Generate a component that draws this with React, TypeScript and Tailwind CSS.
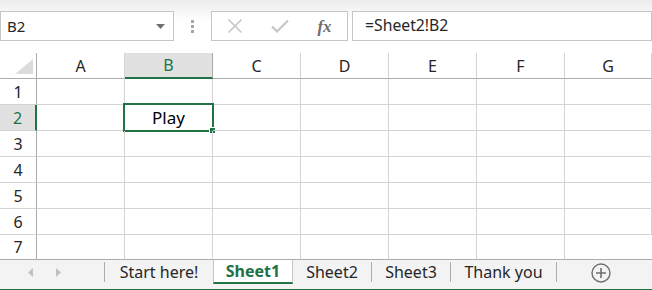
import React from "react";

const cols = ["A", "B", "C", "D", "E", "F", "G"];
const rows = [1, 2, 3, 4, 5, 6, 7];
const font = { fontFamily: '"Noto Sans", "Open Sans", sans-serif' };

function FormulaBar() {
  return (
    <div className="flex items-center h-[41px] pt-[11px] bg-gradient-to-b from-[#ebebeb] via-white to-white">
      <div className="flex items-center justify-between w-[174px] h-[30px] border border-[#c6c6c6] bg-white pl-[6px] pr-[8px]">
        <span className="text-[15px] text-[#262626] leading-none">B2</span>
        <svg width="9" height="5" viewBox="0 0 9 5">
          <path d="M0 0h9L4.5 5z" fill="#6f6f6f" />
        </svg>
      </div>
      <div className="flex flex-col gap-[2px] w-[37px] items-center">
        <span className="w-[3px] h-[3px] bg-[#a6a6a6]" />
        <span className="w-[3px] h-[3px] bg-[#a6a6a6]" />
        <span className="w-[3px] h-[3px] bg-[#a6a6a6]" />
      </div>
      <div className="flex items-center w-[137px] h-[30px] border border-[#c6c6c6] bg-white">
        <div className="w-[46px] flex justify-center">
          <svg width="16" height="16" viewBox="0 0 16 16">
            <path d="M1.5 1.5l13 13M14.5 1.5l-13 13" stroke="#c6c6c6" strokeWidth="1.6" />
          </svg>
        </div>
        <div className="w-[44px] flex justify-center">
          <svg width="18" height="14" viewBox="0 0 18 14">
            <path d="M1 7.5l5 5L17 1.5" stroke="#c6c6c6" strokeWidth="2.2" fill="none" />
          </svg>
        </div>
        <div className="flex-1 flex justify-center">
          <span className="italic font-bold text-[17px] text-[#6f6f6f] leading-none" style={{ fontFamily: '"Liberation Serif", serif' }}>
            fx
          </span>
        </div>
      </div>
      <div className="w-[4px]" />
      <div className="flex-1 h-[30px] border border-[#c6c6c6] bg-white flex items-center pl-[12px]">
        <span className="text-[15.75px] text-[#262626] leading-none">=Sheet2!B2</span>
      </div>
    </div>
  );
}

function Grid() {
  return (
    <div className="grid grid-cols-[37px_repeat(6,88px)_87px] mt-[12px]">
      <div className="h-[26px] border-r border-b border-[#ababab] bg-white flex items-end justify-end pr-[3px] pb-[4px]">
        <svg width="18" height="15" viewBox="0 0 18 15">
          <path d="M18 0v15H0z" fill="#dcdcdc" />
        </svg>
      </div>
      {cols.map((c) => (
        <div
          key={c}
          className={
            c === "B"
              ? "h-[26px] flex items-center justify-center text-[16px] bg-[#e1e1e1] text-[#217346] border-r border-[#ababab] border-b-2 border-b-[#217346]"
              : "h-[26px] flex items-center justify-center text-[16px] bg-white text-[#262626] border-r border-r-[#d4d4d4] border-b border-b-[#ababab] last:border-r-0"
          }
        >
          {c}
        </div>
      ))}
      {rows.map((r) => (
        <React.Fragment key={r}>
          <div
            className={
              r === 2
                ? "h-[26px] flex items-center justify-center text-[16px] bg-[#e1e1e1] text-[#217346] border-r-2 border-r-[#217346] border-b border-b-[#d4d4d4]"
                : r === 7
                ? "h-[25px] flex items-center justify-center text-[16px] text-[#262626] border-r border-b border-[#ababab]"
                : "h-[26px] flex items-center justify-center text-[16px] text-[#262626] border-r border-r-[#ababab] border-b border-b-[#d4d4d4]"
            }
          >
            {r}
          </div>
          {cols.map((c) => (
            <div
              key={c}
              className={
                r === 7
                  ? "relative h-[25px] border-r border-r-[#d4d4d4] border-b border-b-[#ababab] last:border-r-0"
                  : "relative h-[26px] border-r border-b border-[#d4d4d4] last:border-r-0"
              }
            >
              {r === 2 && c === "B" && (
                <>
                  <div className="absolute -left-[2px] -top-[2px] -right-[2px] -bottom-[2px] border-2 border-[#217346] flex items-center justify-center text-[17px] text-black">
                    Play
                  </div>
                  <div className="absolute -right-[4px] -bottom-[4px] w-[7px] h-[7px] bg-[#217346] border border-white" />
                </>
              )}
            </div>
          ))}
        </React.Fragment>
      ))}
    </div>
  );
}

function Tabs() {
  const sep = <div className="w-px h-[20px] bg-[#ababab]" />;
  return (
    <div className="flex items-start h-[31px] bg-[#f3f3f3] border-b-2 border-[#217346]">
      <div className="flex items-center h-[24px] w-[104px] pl-[28px] gap-[23px]">
        <svg width="5" height="9" viewBox="0 0 5 9">
          <path d="M5 0v9L0 4.5z" fill="#c0c0c0" />
        </svg>
        <svg width="5" height="9" viewBox="0 0 5 9">
          <path d="M0 0v9l5-4.5z" fill="#c0c0c0" />
        </svg>
      </div>
      <div className="flex items-center h-[24px] text-[16px] text-[#262626]">
        {sep}
        <div className="w-[108px] text-center">Start here!</div>
        <div className="h-[25px] -mt-px w-[80px] bg-white border-x border-[#c6c6c6] border-b-2 border-b-[#217346] flex items-center justify-center font-bold text-[#217346]">
          Sheet1
        </div>
        <div className="w-[78px] text-center">Sheet2</div>
        {sep}
        <div className="w-[78px] text-center">Sheet3</div>
        {sep}
        <div className="w-[105px] text-center">Thank you</div>
        {sep}
        <div className="w-[87px] flex justify-center pt-[2px]">
          <svg width="20" height="20" viewBox="0 0 20 20">
            <circle cx="10" cy="10" r="9" fill="none" stroke="#6f6f6f" strokeWidth="1.4" />
            <path d="M10 5v10M5 10h10" stroke="#6f6f6f" strokeWidth="1.6" />
          </svg>
        </div>
      </div>
    </div>
  );
}

export default function App() {
  return (
    <div className="w-[652px] h-[290px] overflow-hidden bg-white" style={font}>
      <FormulaBar />
      <Grid />
      <Tabs />
    </div>
  );
}
